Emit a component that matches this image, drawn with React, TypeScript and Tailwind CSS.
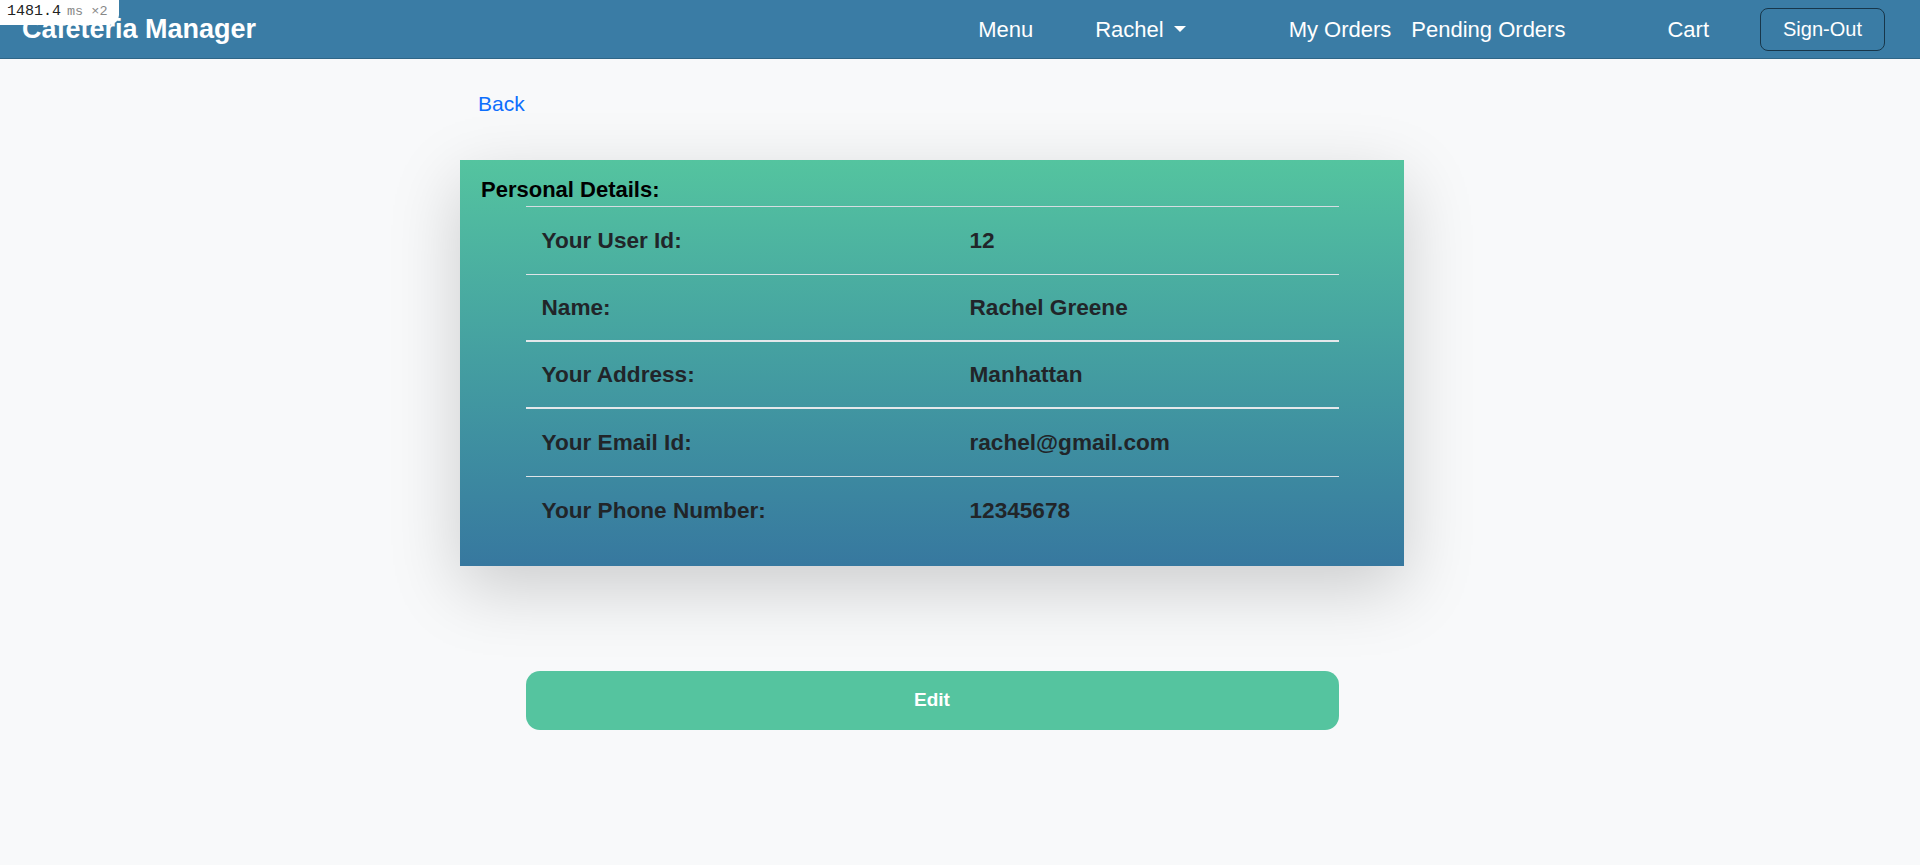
import React from "react";

const rows = [
  { label: "Your User Id:", value: "12", thick: false },
  { label: "Name:", value: "Rachel Greene", thick: true },
  { label: "Your Address:", value: "Manhattan", thick: true },
  { label: "Your Email Id:", value: "rachel@gmail.com", thick: false },
  { label: "Your Phone Number:", value: "12345678", thick: false },
];

export default function App() {
  return (
    <div
      className="min-h-screen bg-[#f8f9fa] relative"
      style={{ fontFamily: '"Liberation Sans", Arial, sans-serif' }}
    >
      {/* timing badge */}
      <div className="absolute top-0 left-0 z-10 h-[25px] w-[119px] bg-white rounded-br-[10px] flex items-center pl-[7px] gap-[6px] font-['Liberation_Mono',monospace]">
        <span className="text-[15px] text-[#222]">1481.4</span>
        <span className="text-[13.5px] text-[#888]">ms ×2</span>
      </div>

      {/* Navbar */}
      <nav className="h-[59px] bg-[#3a7ca5] border-b border-[#2f6687] flex items-center pl-[22px] pr-[35px] text-white">
        <span className="text-[27px] font-bold leading-none">Cafeteria Manager</span>
        <div className="ml-auto flex items-center text-[22px]">
          <a className="">Menu</a>
          <a className="ml-[62px] flex items-center">
            Rachel
            <span className="ml-[10px] w-0 h-0 border-x-[6.5px] border-x-transparent border-t-[6.5px] border-t-white" />
          </a>
          <a className="ml-[103px]">My Orders</a>
          <a className="ml-[20px]">Pending Orders</a>
          <a className="ml-[102px]">Cart</a>
          <button className="ml-[51px] h-[43px] w-[125px] border border-[#17364a] rounded-[8px] text-[20px] text-white">
            Sign-Out
          </button>
        </div>
      </nav>

      <main className="ml-[460px] w-[944px]">
        <div className="h-[88px] flex items-center pl-[18px] pt-[1px]">
          <a className="text-[21px] text-[#0d6efd]">Back</a>
        </div>

        {/* Card */}
        <div className="mt-[13px] bg-gradient-to-b from-[#54c49f] to-[#37789f] shadow-[0_22px_66px_rgba(0,0,0,0.18)] pt-[17px] pb-[21px]">
          <h2 className="pl-[21px] text-[22px] font-bold leading-[26px] text-black mb-[3px]">
            Personal Details:
          </h2>
          <div className="w-[813px] mx-auto border-t border-[#d6dde2]">
            {rows.map((r, i) => (
              <div
                key={r.label}
                className={
                  "grid grid-cols-[428px_1fr] items-center pl-[16px] text-[22.6px] font-bold text-[#212529] " +
                  (i === rows.length - 1
                    ? "h-[68px]"
                    : r.thick
                    ? "h-[67px] border-b-2 border-[#e4e8eb]"
                    : "h-[68px] border-b border-[#dfe4e8]")
                }
              >
                <span>{r.label}</span>
                <span>{r.value}</span>
              </div>
            ))}
          </div>
        </div>

        <div className="mt-[105px] w-[813px] mx-auto">
          <button className="w-full h-[59px] rounded-[14px] bg-[#55c49f] text-white font-bold text-[19px]">
            Edit
          </button>
        </div>
      </main>
    </div>
  );
}
